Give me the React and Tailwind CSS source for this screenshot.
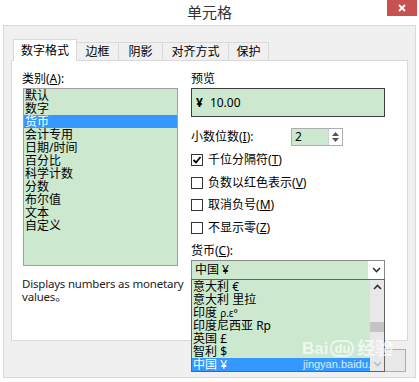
import React from 'react';

const categories = ['默认', '数字', '货币', '会计专用', '日期/时间', '百分比', '科学计数', '分数', '布尔值', '文本', '自定义'];
const currencies = [
  ['意大利', '€'],
  ['意大利', '里拉'],
  ['印度', 'ρ.ε°'],
  ['印度尼西亚', 'Rp'],
  ['英国', '£'],
  ['智利', '$'],
  ['中国', '¥'],
];
const tabs = [
  { label: '数字格式', w: 'w-[64px]', active: true },
  { label: '边框', w: 'w-[43px]' },
  { label: '阴影', w: 'w-[45px]' },
  { label: '对齐方式', w: 'w-[67px]' },
  { label: '保护', w: 'w-[41px]' },
];
const options = [
  { label: '千位分隔符', key: 'T', checked: true },
  { label: '负数以红色表示', key: 'V' },
  { label: '取消负号', key: 'M' },
  { label: '不显示零', key: 'Z' },
];

const Chevron = ({ up = false, color = '#333' }) => (
  <svg width="9" height="6" viewBox="0 0 9 6">
    <path d={up ? 'M1 5 L4.5 1.5 L8 5' : 'M1 1 L4.5 4.5 L8 1'} fill="none" stroke={color} strokeWidth="1.6" />
  </svg>
);

const CheckBox = ({ checked }) => (
  <div className="w-[12px] h-[12px] border border-[#333] bg-white flex items-center justify-center">
    {checked && (
      <svg width="10" height="10" viewBox="0 0 10 10">
        <path d="M1.5 5 L4 7.5 L8.5 2" fill="none" stroke="#000" strokeWidth="1.8" />
      </svg>
    )}
  </div>
);

const App = () => (
  <div className="w-[419px] h-[382px] bg-white relative overflow-hidden text-black font-['Noto_Sans','Noto_Sans_CJK_SC',sans-serif]">
    {/* title bar */}
    <div className="h-[25px] flex items-center justify-center text-[15px] text-[#333]">单元格</div>
    <div className="absolute left-[387px] top-0 w-[30px] h-[16px] bg-[#c75050] flex items-center justify-center">
      <svg width="8" height="8" viewBox="0 0 8 8">
        <path d="M1 1 L7 7 M7 1 L1 7" stroke="#fff" strokeWidth="1.8" />
      </svg>
    </div>

    {/* dialog body */}
    <div className="mx-[3px] h-[353px] bg-[#f0f0f0] border border-[#d9d9d9] pl-[7px] pr-[7px] pt-[13px]">
      <div className="flex items-end h-[22px] -mb-[1px] relative z-10 pl-[2px] text-[12px]">
        {tabs.map((t) =>
          t.active ? (
            <div key={t.label} className={`${t.w} h-[22px] bg-white border-x border-t border-[#d9d9d9] flex items-center justify-center`}>
              {t.label}
            </div>
          ) : (
            <div key={t.label} className={`${t.w} h-[18px] mb-[1px] -ml-px bg-[#f0f0f0] border-x border-t border-[#d9d9d9] flex items-center justify-center`}>
              {t.label}
            </div>
          )
        )}
      </div>

      <div className="h-[281px] bg-white border border-[#d9d9d9] flex pl-[10px] pt-[10px] text-[12px]">
        {/* left column */}
        <div className="w-[157px] flex flex-col">
          <div className="h-[16px] leading-[16px]">类别(<u>A</u>):</div>
          <div className="mt-[1px] ml-[1px] w-[155px] h-[178px] border border-[#a0a0a0] bg-[#cce8cf] leading-[13px]">
            {categories.map((c) => (
              <div key={c} className={`h-[13px] pl-[1px] ${c === '货币' ? 'bg-[#3399ff] text-white' : ''}`}>{c}</div>
            ))}
          </div>
          <div className="mt-[11px] w-[166px] leading-[13px] text-[11.5px] tracking-[-0.2px] text-[#222]">Displays numbers as monetary values。</div>
        </div>

        {/* right column */}
        <div className="ml-[12px] w-[194px] flex flex-col">
          <div className="h-[16px] leading-[16px]">预览</div>
          <div className="mt-[1px] h-[29px] border border-[#3c3c3c] bg-[#cce8cf] flex items-center pl-[4px]">
            <span className="font-bold">¥</span>
            <span className="ml-[7px]">10.00</span>
          </div>

          <div className="mt-[11px] h-[18px] flex items-center">
            <div className="w-[100px]">小数位数(<u>I</u>):</div>
            <div className="w-[52px] h-[18px] flex border border-[#abadb3]">
              <div className="w-[36px] bg-[#cce8cf] pl-[3px] leading-[16px]">2</div>
              <div className="flex-1 bg-white border-l border-[#d0d0d0] flex flex-col items-center justify-center gap-[2px]">
                <svg width="7" height="4" viewBox="0 0 7 4"><path d="M0 4 L3.5 0 L7 4 Z" fill="#555" /></svg>
                <svg width="7" height="4" viewBox="0 0 7 4"><path d="M0 0 L3.5 4 L7 0 Z" fill="#555" /></svg>
              </div>
            </div>
          </div>

          <div className="mt-[3px] flex flex-col">
            {options.map((o) => (
              <div key={o.key} className="h-[22.5px] flex items-center">
                <CheckBox checked={o.checked} />
                <span className="ml-[5px]">{o.label}(<u>{o.key}</u>)</span>
              </div>
            ))}
          </div>

          <div className="mt-[4px] h-[16px] leading-[16px]">货币(<u>C</u>):</div>
          <div className="mt-[1px] relative">
            <div className="h-[20px] border border-[#8a8a8a] bg-[#cce8cf] flex items-center pl-[3px]">
              <span className="flex-1">中国 ¥</span>
              <div className="w-[16px] h-full bg-white flex items-center justify-center">
                <Chevron />
              </div>
            </div>
            <div className="absolute left-0 top-[19px] w-[194px] h-[93px] border border-[#646464] bg-[#cce8cf] flex z-20 leading-[13px]">
              <div className="flex-1 flex flex-col">
                {currencies.map(([n, s], i) => (
                  <div key={i} className={`h-[13px] pl-[1px] relative ${i === 6 ? 'bg-[#3399ff] text-white' : ''}`}>
                    {n} <span className={s === 'ρ.ε°' ? 'text-[10px]' : ''}>{s}</span>
                    {i === 6 && (
                      <span className="absolute left-[111px] top-0 text-[11px] text-white/80 font-['Liberation_Sans',sans-serif]">jingyan.baidu.</span>
                    )}
                  </div>
                ))}
              </div>
              <div className="w-[14px] bg-[#e8e8e8] flex flex-col items-center">
                <div className="h-[14px] flex items-center"><Chevron up /></div>
                <div className="mt-[28px] w-[14px] h-[10px] bg-[#c4c4c4]" />
                <div className="mt-auto h-[14px] flex items-center"><Chevron color="#bbb" /></div>
              </div>
            </div>
          </div>
        </div>
      </div>

      {/* buttons, mostly hidden below the drop-down */}
      <div className="mt-[8px] flex justify-end gap-[6px] pr-[2px] text-[12px]">
        <div className="w-[75px] h-[23px] border border-[#adadad] bg-[#e1e1e1] flex items-center justify-center">确定</div>
        <div className="w-[75px] h-[23px] border border-[#adadad] bg-[#e8e8e8] flex items-center justify-center">取消</div>
      </div>
    </div>

    {/* watermark */}
    <div className="absolute left-[302px] top-[335px] z-30 flex items-center text-white/70 font-bold pointer-events-none">
      <span className="text-[17px] font-['Liberation_Sans',sans-serif]">Bai</span>
      <span className="ml-[2px] text-[13px] font-['Liberation_Sans',sans-serif] border-2 border-white/60 rounded-[8px] px-[2px] leading-[13px]">du</span>
      <span className="ml-[3px] text-[18px]">经验</span>
    </div>
  </div>
);

export default App;
